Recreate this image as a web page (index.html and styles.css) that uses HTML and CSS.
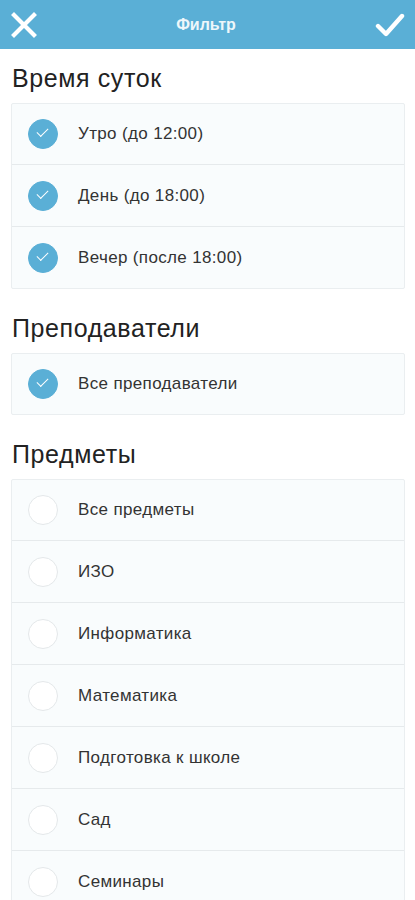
FILE: index.html
```html
<!DOCTYPE html>
<html lang="ru">
<head>
    <meta charset="UTF-8">
    <meta name="viewport" content="width=device-width, initial-scale=1.0">
    <title>Фильтр</title>
    <link rel="stylesheet" href="styles.css">
</head>
<body>
    <div class="header">
        <button class="header-btn" aria-label="Закрыть">
            <svg width="26" height="26" viewBox="0 0 26 26"><path d="M3 3 L23 23 M23 3 L3 23" stroke="#fff" stroke-width="4.2" stroke-linecap="square"/></svg>
        </button>
        <div class="title">Фильтр</div>
        <button class="header-btn" aria-label="Применить">
            <svg width="30" height="26" viewBox="0 0 30 26"><path d="M3 14 L11 22 L27 4" stroke="#fff" stroke-width="4.4" fill="none" stroke-linecap="round" stroke-linejoin="round"/></svg>
        </button>
    </div>

    <h2 class="section-title">Время суток</h2>
    <div class="card">
        <div class="row"><span class="check checked"></span>Утро (до 12:00)</div>
        <div class="row"><span class="check checked"></span>День (до 18:00)</div>
        <div class="row"><span class="check checked"></span>Вечер (после 18:00)</div>
    </div>

    <h2 class="section-title">Преподаватели</h2>
    <div class="card">
        <div class="row"><span class="check checked"></span>Все преподаватели</div>
    </div>

    <h2 class="section-title">Предметы</h2>
    <div class="card">
        <div class="row"><span class="check"></span>Все предметы</div>
        <div class="row"><span class="check"></span>ИЗО</div>
        <div class="row"><span class="check"></span>Информатика</div>
        <div class="row"><span class="check"></span>Математика</div>
        <div class="row"><span class="check"></span>Подготовка к школе</div>
        <div class="row"><span class="check"></span>Сад</div>
        <div class="row"><span class="check"></span>Семинары</div>
    </div>
</body>
</html>
```

FILE: styles.css
```css
body {
    font-family: "Liberation Sans", Arial, sans-serif;
    background-color: #fff;
    margin: 0;
    padding: 0;
    color: #333;
}
.header {
    height: 49px;
    background-color: #5aafd6;
    display: flex;
    align-items: center;
    justify-content: space-between;
    padding: 0 10px 0 11px;
}
.header-btn {
    background: none;
    border: none;
    padding: 0;
    display: flex;
    cursor: pointer;
}
.title {
    color: #eef7fb;
    font-size: 16px;
    font-weight: bold;
}
.section-title {
    font-size: 25px;
    letter-spacing: 0.6px;
    font-weight: normal;
    line-height: 28px;
    color: #222;
    margin: 15px 12px 11px;
}
.card + .section-title {
    margin-top: 25px;
}
.card {
    margin: 0 10px 0 11px;
    background-color: #f9fcfd;
    border: 1px solid #eaeef0;
    border-radius: 2px;
}
.row {
    height: 61px;
    display: flex;
    align-items: center;
    font-size: 17px;
    letter-spacing: 0.35px;
    color: #333;
    border-top: 1px solid #e6eaec;
}
.row:first-child {
    border-top: none;
    height: 60px;
}
.check {
    width: 30px;
    height: 30px;
    border-radius: 50%;
    margin: 0 20px 0 16px;
    box-sizing: border-box;
    border: 1px solid #e4e8ea;
    background-color: #fff;
    position: relative;
}
.check.checked {
    background-color: #5aafd6;
    border-color: #5aafd6;
}
.check.checked::after {
    content: "";
    position: absolute;
    left: 8px;
    top: 8px;
    width: 10px;
    height: 5px;
    border-left: 1.5px solid #fff;
    border-bottom: 1.5px solid #fff;
    transform: rotate(-45deg);
}
```
